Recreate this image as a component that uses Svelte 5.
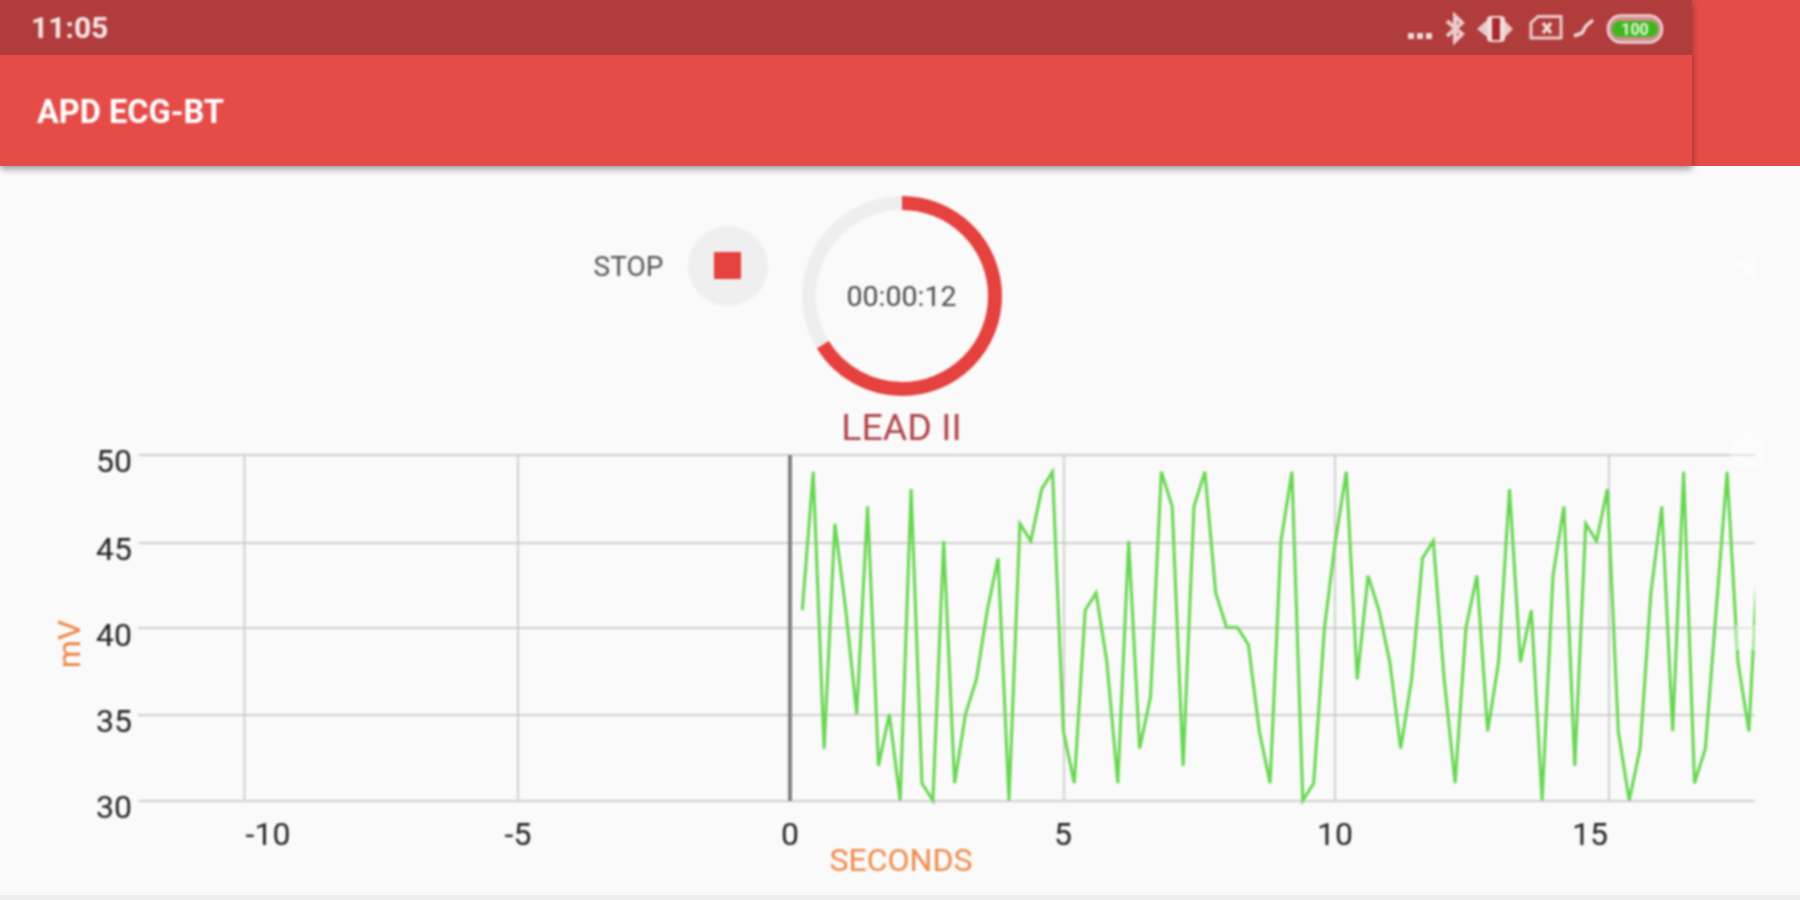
<script>
    // ECG samples in mV, one every 0.2 s starting just after t = 0
    const samples = [
        41, 49, 33, 46, 41, 35, 47, 32, 35, 30, 48, 31, 30, 45, 31, 35, 37, 41, 44, 30,
        46, 45, 48, 49, 34, 31, 41, 42, 38, 31, 45, 33, 36, 49, 47, 32, 47, 49, 42, 40,
        40, 39, 34, 31, 45, 49, 30, 31, 40, 45, 49, 37, 43, 41, 38, 33, 37, 44, 45, 37,
        31, 40, 43, 34, 38, 48, 38, 41, 30, 43, 47, 32, 46, 45, 48, 34, 30, 33, 42, 47,
        34, 49, 31, 33, 41, 49, 38, 34, 46
    ];

    const toY = (mv) => 801.5 - (mv - 30) * 17.3;

    const trace = samples
        .map((mv, i) => `${(802.3 + i * 10.88).toFixed(1)},${toY(mv).toFixed(1)}`)
        .join(' ');

    const rows = [
        { label: '50', y: 456, text: 473 },
        { label: '45', y: 544, text: 561 },
        { label: '40', y: 629, text: 647 },
        { label: '35', y: 716, text: 733 },
        { label: '30', y: 802, text: 819 }
    ];
    const columns = [
        { x: 244.5, label: '-10', at: 268 },
        { x: 518, label: '-5', at: 518 },
        { x: 1064, label: '5', at: 1063 },
        { x: 1335, label: '10', at: 1335 },
        { x: 1609, label: '15', at: 1590 }
    ];

    // progress ring
    const radius = 93;
    const circumference = 2 * Math.PI * radius;
    const progress = 238 / 360;
</script>

<div class="screen">
    <header class="top">
        <div class="bars">
            <div class="status">
                <span class="clock">11:05</span>
                <svg class="status-icons" width="270" height="55" viewBox="1400 0 270 55">
                    <g fill="#f3dcdc">
                        <rect x="1408" y="33" width="6" height="6" />
                        <rect x="1417" y="33" width="6" height="6" />
                        <rect x="1426" y="33" width="6" height="6" />
                    </g>
                    <path d="M1447 21 L1462 34 L1455 41 V16 L1462 23 L1447 36" fill="none" stroke="#eccccc" stroke-width="4" />
                    <path d="M1487 20 L1477 29 L1487 37 Z M1504 20 L1513 29 L1504 38 Z" fill="#ecc8c8" />
                    <rect x="1488" y="17" width="16" height="24" rx="3" fill="#f3dcdc" stroke="#f3dcdc" stroke-width="2" />
                    <rect x="1492" y="18" width="8" height="22" fill="#a8292d" />
                    <path d="M1538 16.5 H1561 V38 H1531 V23 Z" fill="none" stroke="#eccccc" stroke-width="3" />
                    <path d="M1543 23 L1551 33 M1551 23 L1543 33" stroke="#f3dcdc" stroke-width="3.5" />
                    <path d="M1574 36 L1582 33 L1586 26 L1593 20" fill="none" stroke="#f0d5d5" stroke-width="3.5" />
                    <rect x="1608" y="15.5" width="54" height="27" rx="13" fill="#cf8f8f" stroke="#f0d5d5" stroke-width="2.5" />
                    <rect x="1612" y="21" width="46" height="16" rx="8" fill="#3cb81c" />
                    <text x="1635" y="34.5" class="battery-text">100</text>
                </svg>
            </div>
            <div class="appbar"><span class="title">APD ECG-BT</span></div>
        </div>
    </header>

    <main>
        <div class="controls">
            <div class="stop-group">
                <span class="stop-label">STOP</span>
                <button class="stop-btn" aria-label="Stop"><span class="stop-square"></span></button>
            </div>
            <div class="ring">
                <svg width="200" height="202" viewBox="0 0 200 202">
                    <circle cx="100" cy="101" r={radius} fill="none" stroke="#eeeeee" stroke-width="14" />
                    <circle
                        cx="100"
                        cy="101"
                        r={radius}
                        fill="none"
                        stroke="#e5413e"
                        stroke-width="14"
                        stroke-dasharray="{circumference * progress} {circumference}"
                        transform="rotate(-90 100 101)"
                    />
                </svg>
                <span class="timer">00:00:12</span>
            </div>
            <div></div>
        </div>

        <div class="lead">LEAD II</div>

        <svg class="chart" width="1800" height="455" viewBox="0 440 1800 455">
            <defs>
                <clipPath id="plot"><rect x="140" y="440" width="1615" height="370" /></clipPath>
            </defs>

            {#each rows as row}
                <line x1="138" x2="1755" y1={row.y} y2={row.y} class="grid" />
                <text x="132" y={row.text} class="tick" text-anchor="end">{row.label}</text>
            {/each}
            {#each columns as col}
                <line x1={col.x} x2={col.x} y1="456" y2="801" class="grid thin" />
                <text x={col.at} y="846" class="tick" text-anchor="middle">{col.label}</text>
            {/each}

            <line x1="790" x2="790" y1="456" y2="802" class="zero" />
            <text x="790" y="846" class="tick" text-anchor="middle">0</text>

            <polyline points={trace} class="trace" clip-path="url(#plot)" />

            <text x="901" y="872" class="axis-title" text-anchor="middle">SECONDS</text>
            <text class="axis-title mv" text-anchor="middle" transform="translate(80 645) rotate(-90)">mV</text>
        </svg>
    </main>

    <!-- faint system navigation keys sitting over the page -->
    <svg class="nav-keys" width="70" height="440" viewBox="1730 240 70 440" aria-hidden="true">
        <path d="M1757 253 V280 L1733 266 Z" />
        <circle cx="1748" cy="450" r="18" />
        <rect x="1735" y="625" width="22" height="25" />
    </svg>
</div>

<style>
    :global(body) {
        background: #fafafa;
    }

    .screen {
        position: relative;
        width: 1800px;
        height: 900px;
        overflow: hidden;
        background: #fafafa;
        font-family: Roboto, "Liberation Sans", sans-serif;
        display: flex;
        flex-direction: column;
        border-bottom: 5px solid #eeeeee;
        box-sizing: border-box;
    }

    .top {
        height: 166px;
        flex: none;
        background: #e54c48;
    }

    .bars {
        width: 1692px;
        height: 166px;
        box-shadow: 0 3px 7px rgba(0, 0, 0, 0.4);
    }

    .status {
        height: 55px;
        background: #b03c3c;
        display: flex;
        align-items: center;
        justify-content: space-between;
        padding: 0 22px 0 31px;
    }

    /* the source is an upscaled capture, so everything drawn is slightly soft */
    .clock,
    .status-icons,
    .title,
    main,
    .nav-keys {
        filter: blur(1px);
    }

    .clock {
        color: #f6e6e6;
        font-size: 30px;
        font-weight: 700;
    }

    .status-icons {
        display: block;
    }

    .battery-text {
        font-size: 16px;
        font-weight: 700;
        fill: #e8f6e0;
        text-anchor: middle;
    }

    .appbar {
        height: 111px;
        background: #e54c48;
        display: flex;
        align-items: center;
        padding: 3px 0 0 37px;
        box-sizing: border-box;
        color: #fff;
        font-size: 32.5px;
        font-weight: 700;
    }

    main {
        flex: 1;
        padding-top: 29px;
    }

    .controls {
        display: grid;
        grid-template-columns: 1fr 200px 1fr;
        padding-left: 3px;
        column-gap: 34px;
    }

    .stop-group {
        display: flex;
        justify-content: flex-end;
        align-items: center;
        gap: 24px;
        height: 80px;
        margin-top: 31px;
    }

    .stop-label {
        color: #555;
        font-size: 28px;
    }

    .stop-btn {
        width: 80px;
        height: 80px;
        border: none;
        border-radius: 50%;
        padding: 0;
        background: #efefef;
        display: flex;
        align-items: center;
        justify-content: center;
    }

    .stop-square {
        width: 27px;
        height: 27px;
        margin-top: -1px;
        background: #e5413e;
    }

    .ring {
        position: relative;
        height: 202px;
    }

    .ring svg {
        display: block;
    }

    .timer {
        position: absolute;
        inset: 0;
        display: flex;
        align-items: center;
        justify-content: center;
        color: #4a4a4a;
        font-size: 28.5px;
    }

    .lead {
        height: 42px;
        padding-left: 3px;
        margin-top: 9px;
        line-height: 42px;
        text-align: center;
        color: #b0434a;
        font-size: 37.5px;
    }

    .chart {
        display: block;
        margin-top: -9px;
    }

    .grid {
        stroke: #d0d0d0;
        stroke-width: 2;
    }

    .thin {
        stroke: #c2c2c2;
        stroke-width: 1.5;
    }

    .zero {
        stroke: #808080;
        stroke-width: 4;
    }

    .tick {
        font-size: 32px;
        fill: #222;
    }

    .trace {
        fill: none;
        stroke: #66d64f;
        stroke-width: 3;
        stroke-linejoin: miter;
    }

    .axis-title {
        font-size: 32px;
        fill: #ee8a48;
    }

    .mv {
        fill: #ee8442;
    }

    .nav-keys {
        position: absolute;
        left: 1730px;
        top: 240px;
        fill: #ffffff;
        opacity: 0.45;
        pointer-events: none;
    }
</style>
